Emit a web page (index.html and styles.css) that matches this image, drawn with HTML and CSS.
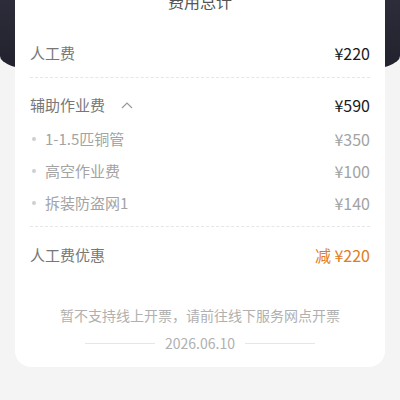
FILE: index.html
```html
<!DOCTYPE html>
<html lang="zh-CN">
<head>
  <meta charset="UTF-8">
  <meta name="viewport" content="width=device-width, initial-scale=1.0">
  <title>费用总计</title>
  <link rel="stylesheet" href="styles.css">
</head>
<body>
  <div class="header-bg"></div>

  <div class="fee-card">
    <h2 class="fee-title">费用总计</h2>

    <div class="fee-row fee-section">
      <span class="fee-label">人工费</span>
      <span class="fee-amount">¥220</span>
    </div>

    <div class="fee-section fee-group">
      <div class="fee-row">
        <span class="fee-label">辅助作业费
          <svg class="chevron" width="12" height="8" viewBox="0 0 12 8">
            <path d="M1 7 L6 2 L11 7" fill="none" stroke="#999" stroke-width="1.2"/>
          </svg>
        </span>
        <span class="fee-amount">¥590</span>
      </div>
      <div class="fee-sub">
        <span class="sub-label"><i class="dot"></i>1-1.5匹铜管</span>
        <span class="sub-amount">¥350</span>
      </div>
      <div class="fee-sub">
        <span class="sub-label"><i class="dot"></i>高空作业费</span>
        <span class="sub-amount">¥100</span>
      </div>
      <div class="fee-sub">
        <span class="sub-label"><i class="dot"></i>拆装防盗网1</span>
        <span class="sub-amount">¥140</span>
      </div>
    </div>

    <div class="fee-row discount-row">
      <span class="fee-label">人工费优惠</span>
      <span class="discount">减 ¥220</span>
    </div>

    <p class="invoice-note">暂不支持线上开票，请前往线下服务网点开票</p>
    <div class="date-line">
      <span class="line"></span>
      <span class="date">2026.06.10</span>
      <span class="line"></span>
    </div>
  </div>
</body>
</html>
```

FILE: styles.css
```css
body {
  margin: 0;
  font-family: "Noto Sans CJK SC", "Noto Sans", sans-serif;
  background-color: #f4f4f4;
}

.header-bg {
  height: 70px;
  background: linear-gradient(180deg, #2c2c3a, #22222e);
  border-radius: 0 0 40px 40px / 0 0 14px 14px;
}

.fee-card {
  margin: -94px 15px 0;
  padding: 14px 15px 13px;
  background-color: white;
  border-radius: 0 0 16px 16px;
}

.fee-title {
  margin: 0 0 16px;
  font-size: 16px;
  font-weight: normal;
  line-height: 22px;
  color: #555;
  text-align: center;
}

.fee-row {
  display: flex;
  justify-content: space-between;
  align-items: center;
  line-height: 22px;
}

.fee-section {
  border-bottom: 1px dashed #e6e6e6;
}

.fee-row.fee-section {
  padding: 14px 0 13px;
}

.fee-group {
  padding: 16px 0 12px;
}

.fee-label {
  font-size: 15px;
  color: #777;
  display: flex;
  align-items: center;
}

.chevron {
  margin-left: 16px;
}

.fee-amount {
  font-size: 16px;
  color: #1a1a1a;
}

.fee-sub {
  display: flex;
  justify-content: space-between;
  align-items: center;
  line-height: 22px;
  margin-top: 10px;
  font-size: 15px;
  color: #a3a3a3;
}

.fee-group .fee-row + .fee-sub {
  margin-top: 12px;
}

.sub-label {
  display: flex;
  align-items: center;
}

.dot {
  width: 4px;
  height: 4px;
  border-radius: 50%;
  background-color: #cfcfcf;
  margin: 0 9px 0 2px;
}

.sub-amount {
  font-size: 16px;
}

.discount-row {
  padding-top: 17px;
}

.discount {
  font-size: 16px;
  color: #e17d22;
}

.invoice-note {
  margin: 38px 0 0;
  font-size: 14px;
  line-height: 22px;
  color: #b0b0b0;
  text-align: center;
}

.date-line {
  display: flex;
  justify-content: center;
  align-items: center;
  gap: 10px;
  margin-top: 6px;
  line-height: 22px;
}

.line {
  width: 70px;
  height: 1px;
  background-color: #e6e6e6;
}

.date {
  font-size: 14px;
  color: #b0b0b0;
}
```
